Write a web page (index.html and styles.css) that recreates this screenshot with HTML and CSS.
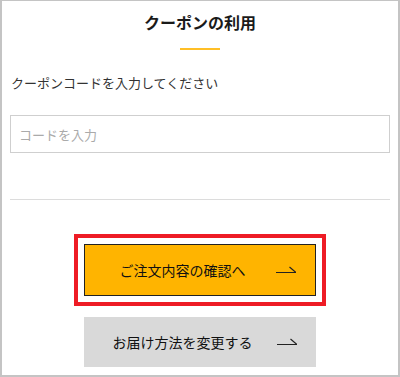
FILE: index.html
```html
<!DOCTYPE html>
<html lang="ja">
  <head>
    <meta charset="UTF-8" />
    <meta name="viewport" content="width=device-width, initial-scale=1.0" />
    <title>クーポンの利用</title>
    <link rel="stylesheet" href="styles.css">
  </head>
  <body>
    <div class="coupon-panel">
      <h2 class="panel-title">クーポンの利用</h2>
      <div class="title-bar"></div>

      <p class="field-label">クーポンコードを入力してください</p>
      <input class="code-input" type="text" placeholder="コードを入力" />

      <hr class="divider" />

      <div class="actions">
        <button class="action-btn primary">
          <span class="btn-text">ご注文内容の確認へ</span>
          <svg class="btn-arrow" width="20" height="8" viewBox="0 0 20 8">
            <path d="M0 6.5 H20 M20 6.5 L13.5 1" fill="none" stroke="#222" stroke-width="1.2" />
          </svg>
        </button>
        <button class="action-btn secondary">
          <span class="btn-text">お届け方法を変更する</span>
          <svg class="btn-arrow" width="20" height="8" viewBox="0 0 20 8">
            <path d="M0 6.5 H20 M20 6.5 L13.5 1" fill="none" stroke="#222" stroke-width="1.2" />
          </svg>
        </button>
      </div>
    </div>
  </body>
</html>
```

FILE: styles.css
```css
* {
  box-sizing: border-box;
  margin: 0;
  padding: 0;
}

body {
  width: 400px;
  height: 377px;
  background-color: #fff;
  font-family: "Noto Sans CJK JP", "Noto Sans", sans-serif;
  color: #222;
}

.coupon-panel {
  width: 400px;
  height: 377px;
  border: 2px solid #c4c4c4;
  border-top-width: 1px;
  padding: 9px 8px 0 8px;
}

.panel-title {
  font-size: 16px;
  font-weight: bold;
  line-height: 24px;
  text-align: center;
  color: #1a1a1a;
}

.title-bar {
  width: 40px;
  height: 2px;
  background-color: #ffbf26;
  margin: 14px auto 0;
}

.field-label {
  margin-top: 23px;
  padding-left: 1px;
  font-size: 13px;
  line-height: 20px;
  color: #333;
}

.code-input {
  display: block;
  width: 100%;
  height: 38px;
  margin-top: 22px;
  padding: 0 8px;
  border: 1px solid #cfcfcf;
  font-family: inherit;
  font-size: 13px;
  color: #333;
  outline: none;
}

.code-input::placeholder {
  color: #aaa;
}

.divider {
  margin-top: 46px;
  border: none;
  border-top: 1px solid #dcdcdc;
}

.actions {
  display: flex;
  flex-direction: column;
  align-items: center;
  gap: 21px;
  margin-top: 44px;
}

.action-btn {
  display: flex;
  align-items: center;
  width: 232px;
  padding: 0 19px 0 4px;
  border: none;
  font-family: inherit;
  font-size: 14px;
  font-weight: normal;
  color: #111;
  cursor: pointer;
}

.action-btn.primary {
  height: 52px;
  background-color: #ffb400;
  border: 1px solid #222;
  outline: 4px solid #ee1c25;
  outline-offset: 6px;
}

.action-btn.secondary {
  height: 50px;
  background-color: #d9d9d9;
}

.btn-text {
  flex: 1;
  text-align: center;
}

.btn-arrow {
  display: block;
  flex-shrink: 0;
}
```
